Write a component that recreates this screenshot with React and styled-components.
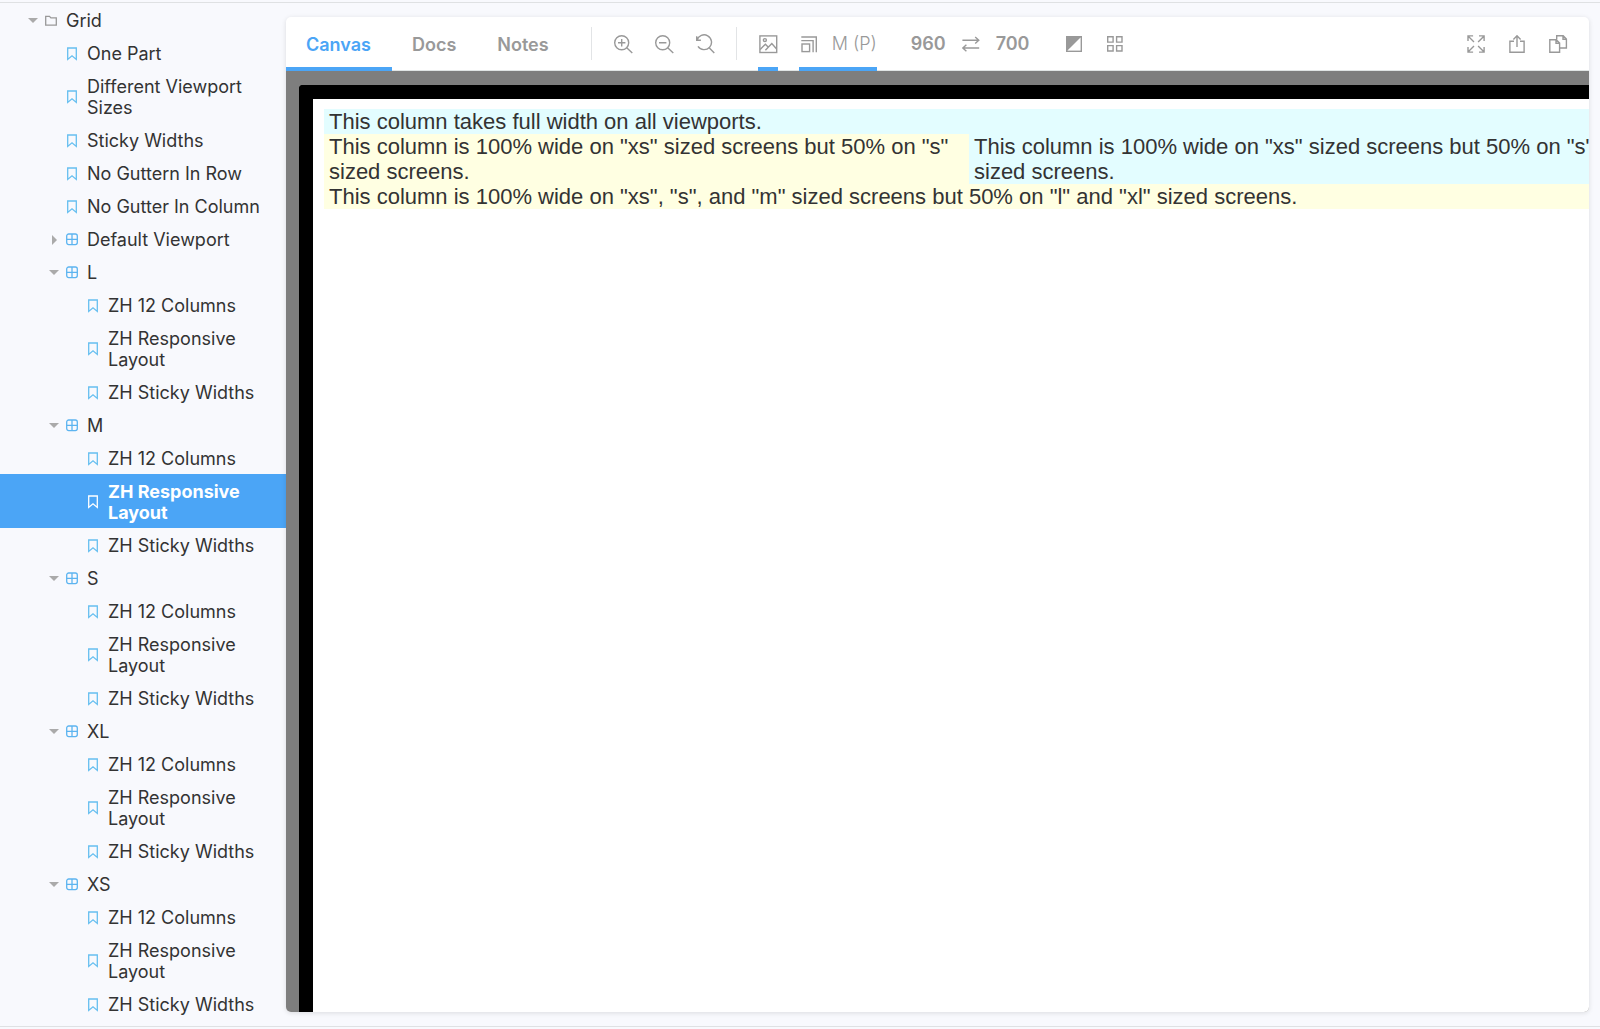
import React, { useState } from 'react';
import styled, { createGlobalStyle, css } from 'styled-components';

const GlobalStyle = createGlobalStyle`
  * {
    box-sizing: border-box;
  }
  body {
    margin: 0;
    background: #f8f9fd;
    color: #333;
    font-family: Inter, 'Liberation Sans', sans-serif;
    font-size: 18px;
  }
`;

const blue = '#4ba5f6';
const grey = '#999';

/* layout */
const Shell = styled.div`
  min-height: 100vh;
  padding: 2px 0;
  display: flex;
`;

const Columns = styled.div`
  flex: 1;
  min-width: 0;
  display: grid;
  grid-template-columns: 286px minmax(0, 1fr);
  border-top: 1px solid #dfe1e3;
  border-bottom: 1px solid #dfe1e3;
`;

const Main = styled.main`
  margin: 14px 11px 14px 0;
  display: flex;
  flex-direction: column;
  background: #fff;
  border-radius: 5px;
  box-shadow: 0 1px 5px rgba(0, 0, 0, 0.12);
  overflow: hidden;
`;

/* sidebar tree */
const TreeList = styled.ul`
  list-style: none;
  margin: 0;
  padding: 0;
`;

const TreeRow = styled.button`
  display: flex;
  align-items: center;
  width: 100%;
  padding: 7px 18px 5px ${({ $depth }) => 27 + $depth * 21}px;
  border: 0;
  background: ${({ $selected }) => ($selected ? blue : 'transparent')};
  color: ${({ $selected }) => ($selected ? '#fff' : '#333')};
  font: inherit;
  font-weight: ${({ $selected }) => ($selected ? 700 : 400)};
  line-height: 21px;
  text-align: left;
  cursor: pointer;
`;

const CaretSlot = styled.span`
  flex: none;
  display: flex;
  justify-content: center;
  width: 12px;
  margin-right: 6px;
`;

const Caret = styled.span`
  border: 5px solid transparent;
  ${({ $open }) =>
    $open
      ? css`
          border-top-color: #aaa;
          border-bottom-width: 0;
        `
      : css`
          border-left-color: #aaa;
          border-right-width: 0;
        `}
`;

const TreeIcon = styled.svg`
  flex: none;
  width: 12px;
  height: 14px;
  margin-right: 9px;
  fill: none;
  stroke: ${({ $color }) => $color};
  stroke-width: 1.3;
`;

/* toolbar */
const Toolbar = styled.div`
  display: flex;
  justify-content: space-between;
  height: 54px;
  padding-right: 21px;
  border-bottom: 1px solid #e0e4e4;
`;

const Group = styled.div`
  display: flex;
  align-items: center;
  gap: 21px;
`;

const Tabs = styled.div`
  display: flex;
`;

const underline = css`
  height: 54px;
  border: 0;
  border-top: 4px solid transparent;
  border-bottom: 4px solid ${({ $active }) => ($active ? blue : 'transparent')};
  background: transparent;
  color: ${grey};
  font: inherit;
  cursor: pointer;
`;

const Tab = styled.button`
  ${underline}
  padding: 2px 21px 0 20px;
  color: ${({ $active }) => ($active ? blue : grey)};
  font-weight: 600;
`;

const ToolButton = styled.button`
  ${underline}
  display: flex;
  align-items: center;
  gap: 13px;
  padding: 0;
  font-weight: 300;
`;

const Separator = styled.span`
  width: 1px;
  height: 33px;
  background: #e2e4e6;
`;

const ToolSvg = styled.svg`
  width: 20px;
  height: 20px;
  fill: none;
  stroke: ${grey};
  stroke-width: 1.4;
`;

const Sizes = styled.div`
  display: flex;
  align-items: center;
  gap: 15px;
  padding: 0 13px;
  color: ${grey};
  font-weight: 600;
`;

const SwapButton = styled.button`
  display: flex;
  padding: 0;
  border: 0;
  background: transparent;
  cursor: pointer;
`;

/* preview */
const Backdrop = styled.div`
  flex: 1;
  display: flex;
  padding: 14px 0 0 13px;
  background: #7e7e7e;
  overflow: hidden;
`;

const Device = styled.div`
  flex: none;
  width: 1340px;
  padding: 10px 11px;
  border: 14px solid #000;
  border-bottom: 0;
  border-radius: 4px 0 0 0;
  background: #fff;
`;

const Row = styled.div`
  display: flex;
  flex-wrap: wrap;
  font-family: 'Liberation Sans', Arial, sans-serif;
  font-size: 22px;
  line-height: 25px;
`;

const Column = styled.div`
  width: ${({ $half }) => ($half ? '50%' : '100%')};
  padding: 0 5px;
  background: ${({ $tone }) => ($tone === 'cyan' ? '#e3fdff' : '#ffffe2')};
`;

const toolPaths = {
  zoomIn: (
    <>
      <circle cx="8.7" cy="8.8" r="7" />
      <path d="M13.7 13.7l5.6 5.4M5 8.8h7.4M8.7 5.1v7.4" />
    </>
  ),
  zoomOut: (
    <>
      <circle cx="8.7" cy="8.8" r="7" />
      <path d="M13.7 13.7l5.6 5.4M5 8.8h7.4" />
    </>
  ),
  zoomReset: <path d="M1.7 2.2v4.1h4.2M2 6.2A7.4 7.4 0 1 1 3 12.4M14.4 13.9l4.9 5" />,
  photo: (
    <>
      <rect x="1.9" y="1.9" width="16.8" height="16.6" />
      <circle cx="6.9" cy="6.1" r="1.5" />
      <path d="M2.2 15.4l5.2-5.2 3.2 3.4M7.4 16.2l6.4-6.6 4.8 5.4" />
    </>
  ),
  grow: (
    <>
      <rect x="3" y="10" width="7.6" height="7.6" />
      <path d="M2.3 6.6h11.8V18.2M2.3 3h15v15.2" />
    </>
  ),
  swap: <path d="M1.4 6.2h16.4M14.2 2.9l3.6 3.3-3.6 3.3M18.2 14H1.8M5.4 10.7L1.8 14l3.6 3.3" />,
  contrast: (
    <>
      <rect x="2.7" y="2.7" width="14.6" height="14.6" />
      <path d="M2.7 17.3V2.7h14.6z" fill="#999" stroke="none" />
    </>
  ),
  grid: <path d="M2.7 2.7h5.4v5.4H2.7zM11.6 2.7H17v5.4h-5.4zM2.7 11.6h5.4V17H2.7zM11.6 11.6H17V17h-5.4z" />,
  expand: (
    <path d="M2 7V1.9h5.1M2 1.9l6 6M13 1.9h5.1V7M18.1 1.9l-6 6M2 13v5.1h5.1M2 18.1l6-6M13 18.1h5.1V13M18.1 18.1l-6-6" />
  ),
  share: <path d="M7 7.3H2.9v10.9h14.2V7.3H13M10 13V2M6.4 5.4L10 1.8l3.6 3.6" />,
  copy: <path d="M1.8 5.7h6.4l3.4 3.4v9.1H1.8zM8 5.8v3.5h3.4M8.7 5.4V1.8h6.5l3.2 3.2v9h-6.6M15 2v3.2h3.2" />,
};

const ToolIcon = ({ name }) => (
  <ToolSvg viewBox="0 0 20 20" aria-hidden="true">
    {toolPaths[name]}
  </ToolSvg>
);

const treeIcons = {
  folder: {
    color: '#999',
    shape: <path d="M.7 2.4h3.8l1.4 1.5h5.4v7.3H.7z" />,
  },
  component: {
    color: '#5cb4f0',
    shape: (
      <>
        <rect x=".7" y="1" width="10.6" height="10.6" rx="2" />
        <path d="M6 1v10.6M.7 6.3h10.6" />
      </>
    ),
  },
  story: {
    color: '#66bff0',
    shape: <path d="M1.7 1h8.6v11.4L6 8.8l-4.3 3.6z" />,
  },
};

const sizeStories = ['ZH 12 Columns', 'ZH Responsive Layout', 'ZH Sticky Widths'];

const tree = [
  {
    id: 'grid',
    name: 'Grid',
    type: 'folder',
    children: [
      ...['One Part', 'Different Viewport Sizes', 'Sticky Widths', 'No Guttern In Row', 'No Gutter In Column'].map(
        (name) => ({ id: name, name, type: 'story' })
      ),
      { id: 'default', name: 'Default Viewport', type: 'component', closed: true, children: [] },
      ...['L', 'M', 'S', 'XL', 'XS'].map((size) => ({
        id: size,
        name: size,
        type: 'component',
        children: sizeStories.map((name) => ({ id: `${size}/${name}`, name, type: 'story' })),
      })),
    ],
  },
];

function TreeItem({ item, depth, selected, onSelect }) {
  const [open, setOpen] = useState(!item.closed);
  const isSelected = selected === item.id;
  const icon = treeIcons[item.type];

  return (
    <li>
      <TreeRow
        type="button"
        $depth={depth}
        $selected={isSelected}
        aria-expanded={item.children ? open : undefined}
        onClick={() => (item.children ? setOpen(!open) : onSelect(item.id))}
      >
        <CaretSlot>{item.children && <Caret $open={open} />}</CaretSlot>
        <TreeIcon viewBox="0 0 12 14" $color={isSelected ? '#fff' : icon.color} aria-hidden="true">
          {icon.shape}
        </TreeIcon>
        <span>{item.name}</span>
      </TreeRow>
      {item.children && open && (
        <TreeList>
          {item.children.map((child) => (
            <TreeItem key={child.id} item={child} depth={depth + 1} selected={selected} onSelect={onSelect} />
          ))}
        </TreeList>
      )}
    </li>
  );
}

function App() {
  const [selected, setSelected] = useState('M/ZH Responsive Layout');
  const [tab, setTab] = useState('Canvas');
  const [size, setSize] = useState([960, 700]);

  return (
    <Shell>
      <GlobalStyle />
      <Columns>
        <nav aria-label="Stories">
          <TreeList>
            {tree.map((item) => (
              <TreeItem key={item.id} item={item} depth={0} selected={selected} onSelect={setSelected} />
            ))}
          </TreeList>
        </nav>

        <Main>
          <Toolbar>
            <Group>
              <Tabs role="tablist">
                {['Canvas', 'Docs', 'Notes'].map((name) => (
                  <Tab
                    key={name}
                    type="button"
                    role="tab"
                    aria-selected={tab === name}
                    $active={tab === name}
                    onClick={() => setTab(name)}
                  >
                    {name}
                  </Tab>
                ))}
              </Tabs>
              <Separator />
              <ToolButton type="button" aria-label="Zoom in"><ToolIcon name="zoomIn" /></ToolButton>
              <ToolButton type="button" aria-label="Zoom out"><ToolIcon name="zoomOut" /></ToolButton>
              <ToolButton type="button" aria-label="Reset zoom"><ToolIcon name="zoomReset" /></ToolButton>
              <Separator />
              <ToolButton type="button" $active aria-label="Background"><ToolIcon name="photo" /></ToolButton>
              <ToolButton type="button" $active>
                <ToolIcon name="grow" />
                M (P)
              </ToolButton>
              <Sizes>
                <span>{size[0]}</span>
                <SwapButton type="button" aria-label="Rotate viewport" onClick={() => setSize([size[1], size[0]])}>
                  <ToolIcon name="swap" />
                </SwapButton>
                <span>{size[1]}</span>
              </Sizes>
              <ToolButton type="button" aria-label="Contrast"><ToolIcon name="contrast" /></ToolButton>
              <ToolButton type="button" aria-label="Grid"><ToolIcon name="grid" /></ToolButton>
            </Group>
            <Group>
              <ToolButton type="button" aria-label="Full screen"><ToolIcon name="expand" /></ToolButton>
              <ToolButton type="button" aria-label="Open in new tab"><ToolIcon name="share" /></ToolButton>
              <ToolButton type="button" aria-label="Copy link"><ToolIcon name="copy" /></ToolButton>
            </Group>
          </Toolbar>

          <Backdrop>
            <Device>
              <Row>
                <Column $tone="cyan">This column takes full width on all viewports.</Column>
                <Column $half>
                  This column is 100% wide on "xs" sized screens but 50% on "s" sized screens.
                </Column>
                <Column $half $tone="cyan">
                  This column is 100% wide on "xs" sized screens but 50% on "s" sized screens.
                </Column>
                <Column>
                  This column is 100% wide on "xs", "s", and "m" sized screens but 50% on "l" and "xl" sized screens.
                </Column>
              </Row>
            </Device>
          </Backdrop>
        </Main>
      </Columns>
    </Shell>
  );
}

export default App;
